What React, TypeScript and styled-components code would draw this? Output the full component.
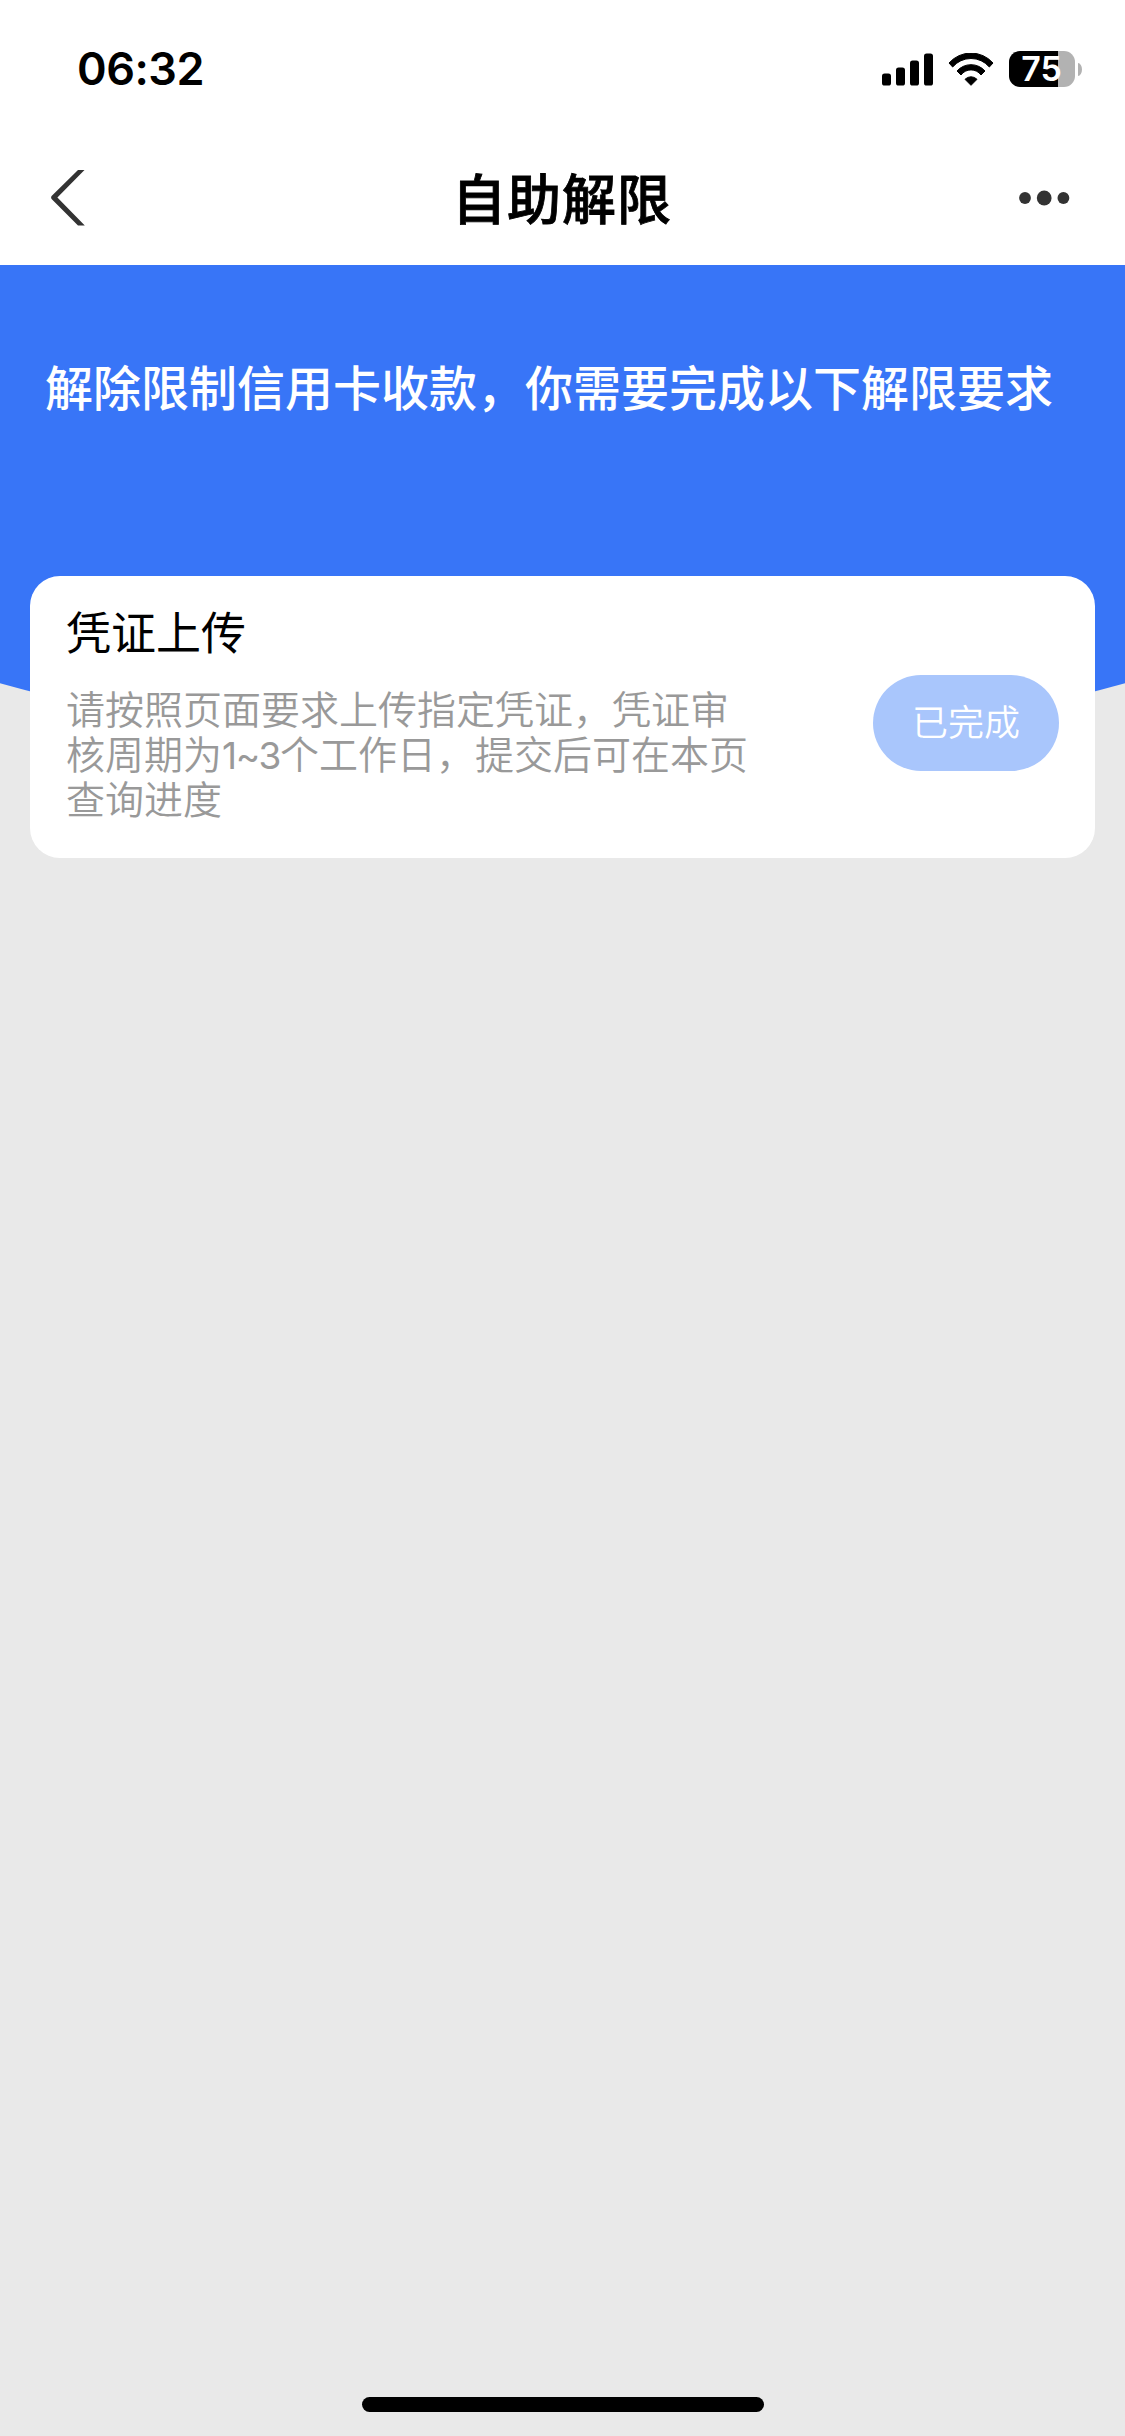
import React from "react";
import styled, { createGlobalStyle } from "styled-components";

const GlobalStyle = createGlobalStyle`
  * { box-sizing: border-box; }
  body { margin: 0; background: #e9e9e9; }
`;

const Screen = styled.div`
  display: flex;
  flex-direction: column;
  width: 1125px;
  height: 2436px;
  overflow: hidden;
  background: #e9e9e9;
  font-family: Inter, "Noto Sans CJK SC", sans-serif;
`;

const StatusBar = styled.header`
  display: flex;
  justify-content: space-between;
  align-items: center;
  flex: none;
  height: 132px;
  padding: 6px 43px 0 77px;
  background: #fff;
`;

const Clock = styled.time`
  font-size: 45px;
  font-weight: 600;
  line-height: 54px;
  letter-spacing: -0.5px;
  color: #000;
`;

const StatusIcons = styled.div`
  display: flex;
  align-items: center;
  gap: 15px;
`;

const BatteryWrap = styled.div`
  display: flex;
  align-items: center;
  gap: 3px;
`;

const BatteryBody = styled.div<{ $level: number }>`
  display: flex;
  align-items: center;
  justify-content: center;
  width: 66px;
  height: 36px;
  padding-right: 1px;
  border-radius: 11px;
  background: linear-gradient(to right, #000 ${(p) => p.$level}%, #b2b2b2 ${(p) => p.$level}%);
  color: #fff;
  font-size: 34px;
  font-weight: 600;
  line-height: 36px;
`;

const BatteryCap = styled.div`
  width: 4px;
  height: 13px;
  border-radius: 0 4px 4px 0 / 0 6.5px 6.5px 0;
  background: #b2b2b2;
`;

const NavBar = styled.nav`
  display: grid;
  grid-template-columns: 120px 1fr 120px;
  align-items: center;
  flex: none;
  height: 133px;
  padding: 0 55px 0 51px;
  background: #fff;
`;

const NavButton = styled.button<{ $end?: boolean }>`
  display: flex;
  justify-content: ${(p) => (p.$end ? "flex-end" : "flex-start")};
  padding: 0 0 1px;
  border: 0;
  background: none;
`;

const NavTitle = styled.h1`
  margin: 0;
  padding: 4px 0 0 3px;
  text-align: center;
  font-size: 54px;
  font-weight: 500;
  line-height: 80px;
  letter-spacing: 1px;
  -webkit-text-stroke: 0.8px #000;
  color: #000;
`;

const Hero = styled.section`
  flex: none;
  height: 495px;
  padding: 88px 45px 0;
  background: #3875f7;
  clip-path: circle(2100px at 50% -1605px);
`;

const HeroText = styled.p`
  margin: 0;
  font-size: 48px;
  font-weight: 500;
  line-height: 72px;
  white-space: nowrap;
  color: #fff;
`;

const Card = styled.article`
  display: flex;
  justify-content: space-between;
  align-items: flex-start;
  flex: none;
  z-index: 1;
  height: 282px;
  margin: -184px 30px 0;
  padding: 25px 36px 0;
  border-radius: 30px;
  background: #fff;
`;

const CardText = styled.div`
  width: 692px;
`;

const CardTitle = styled.h2`
  margin: 0;
  font-size: 45px;
  font-weight: 400;
  line-height: 66px;
  color: #000;
`;

const CardDesc = styled.p`
  margin: 20px 0 0;
  font-size: 39px;
  font-weight: 350;
  line-height: 45px;
  color: #999;
`;

const Range = styled.span`
  font-size: 37px;
  font-weight: 400;
  line-height: 1;
  letter-spacing: -1.3px;
`;

const StatusButton = styled.button`
  width: 186px;
  height: 96px;
  margin-top: 74px;
  padding: 0;
  border: 0;
  border-radius: 48px;
  background: #a9c6fc;
  color: #fff;
  font-family: inherit;
  font-size: 36px;
  font-weight: 350;
  line-height: 96px;
`;

const HomeIndicator = styled.div`
  flex: none;
  align-self: center;
  width: 402px;
  height: 15px;
  margin: auto 0 24px 1px;
  border-radius: 8px;
  background: #000;
`;

const SignalIcon = () => (
  <svg width="51" height="33" viewBox="0 0 51 33">
    <rect x="0" y="20.5" width="9" height="12" rx="2.6" />
    <rect x="14" y="14.5" width="9" height="18" rx="2.6" />
    <rect x="28" y="7.5" width="9" height="25" rx="2.6" />
    <rect x="42" y="0.5" width="9" height="32" rx="2.6" />
  </svg>
);

const WifiIcon = () => (
  <svg width="46" height="33" viewBox="0 0 138 99" stroke="#000" strokeWidth="3" strokeLinejoin="round">
    <path d="M3 30 A88 88 0 0 1 135 30 L124 42 A72 72 0 0 0 14 42 Z" />
    <path d="M27 54 A56 56 0 0 1 111 54 L99 66 A37 37 0 0 0 39 66 Z" />
    <path d="M51 79 A25 25 0 0 1 87 79 L69 97 Z" />
  </svg>
);

const BackIcon = () => (
  <svg width="34" height="56" viewBox="0 0 34 56" fill="#333">
    <path d="M33.5 0 H27 L0.6 26 Q-0.4 27.5 0.6 29 L27 55.5 H33.8 L6.4 27.5 Z" />
  </svg>
);

const MoreIcon = () => (
  <svg width="51" height="16" viewBox="0 0 51 16" fill="#333">
    <circle cx="6" cy="8" r="5.9" />
    <circle cx="25.2" cy="8" r="7.4" />
    <circle cx="44.4" cy="8" r="5.9" />
  </svg>
);

export default function App() {
  return (
    <>
      <GlobalStyle />
      <Screen>
        <StatusBar>
          <Clock>06:32</Clock>
          <StatusIcons>
            <SignalIcon />
            <WifiIcon />
            <BatteryWrap>
              <BatteryBody $level={75}>75</BatteryBody>
              <BatteryCap />
            </BatteryWrap>
          </StatusIcons>
        </StatusBar>
        <NavBar>
          <NavButton aria-label="返回"><BackIcon /></NavButton>
          <NavTitle>自助解限</NavTitle>
          <NavButton $end aria-label="更多"><MoreIcon /></NavButton>
        </NavBar>
        <Hero>
          <HeroText>解除限制信用卡收款，你需要完成以下解限要求</HeroText>
        </Hero>
        <Card>
          <CardText>
            <CardTitle>凭证上传</CardTitle>
            <CardDesc>
              请按照页面要求上传指定凭证，凭证审核周期为<Range>1~3</Range>个工作日，提交后可在本页查询进度
            </CardDesc>
          </CardText>
          <StatusButton>已完成</StatusButton>
        </Card>
        <HomeIndicator />
      </Screen>
    </>
  );
}
